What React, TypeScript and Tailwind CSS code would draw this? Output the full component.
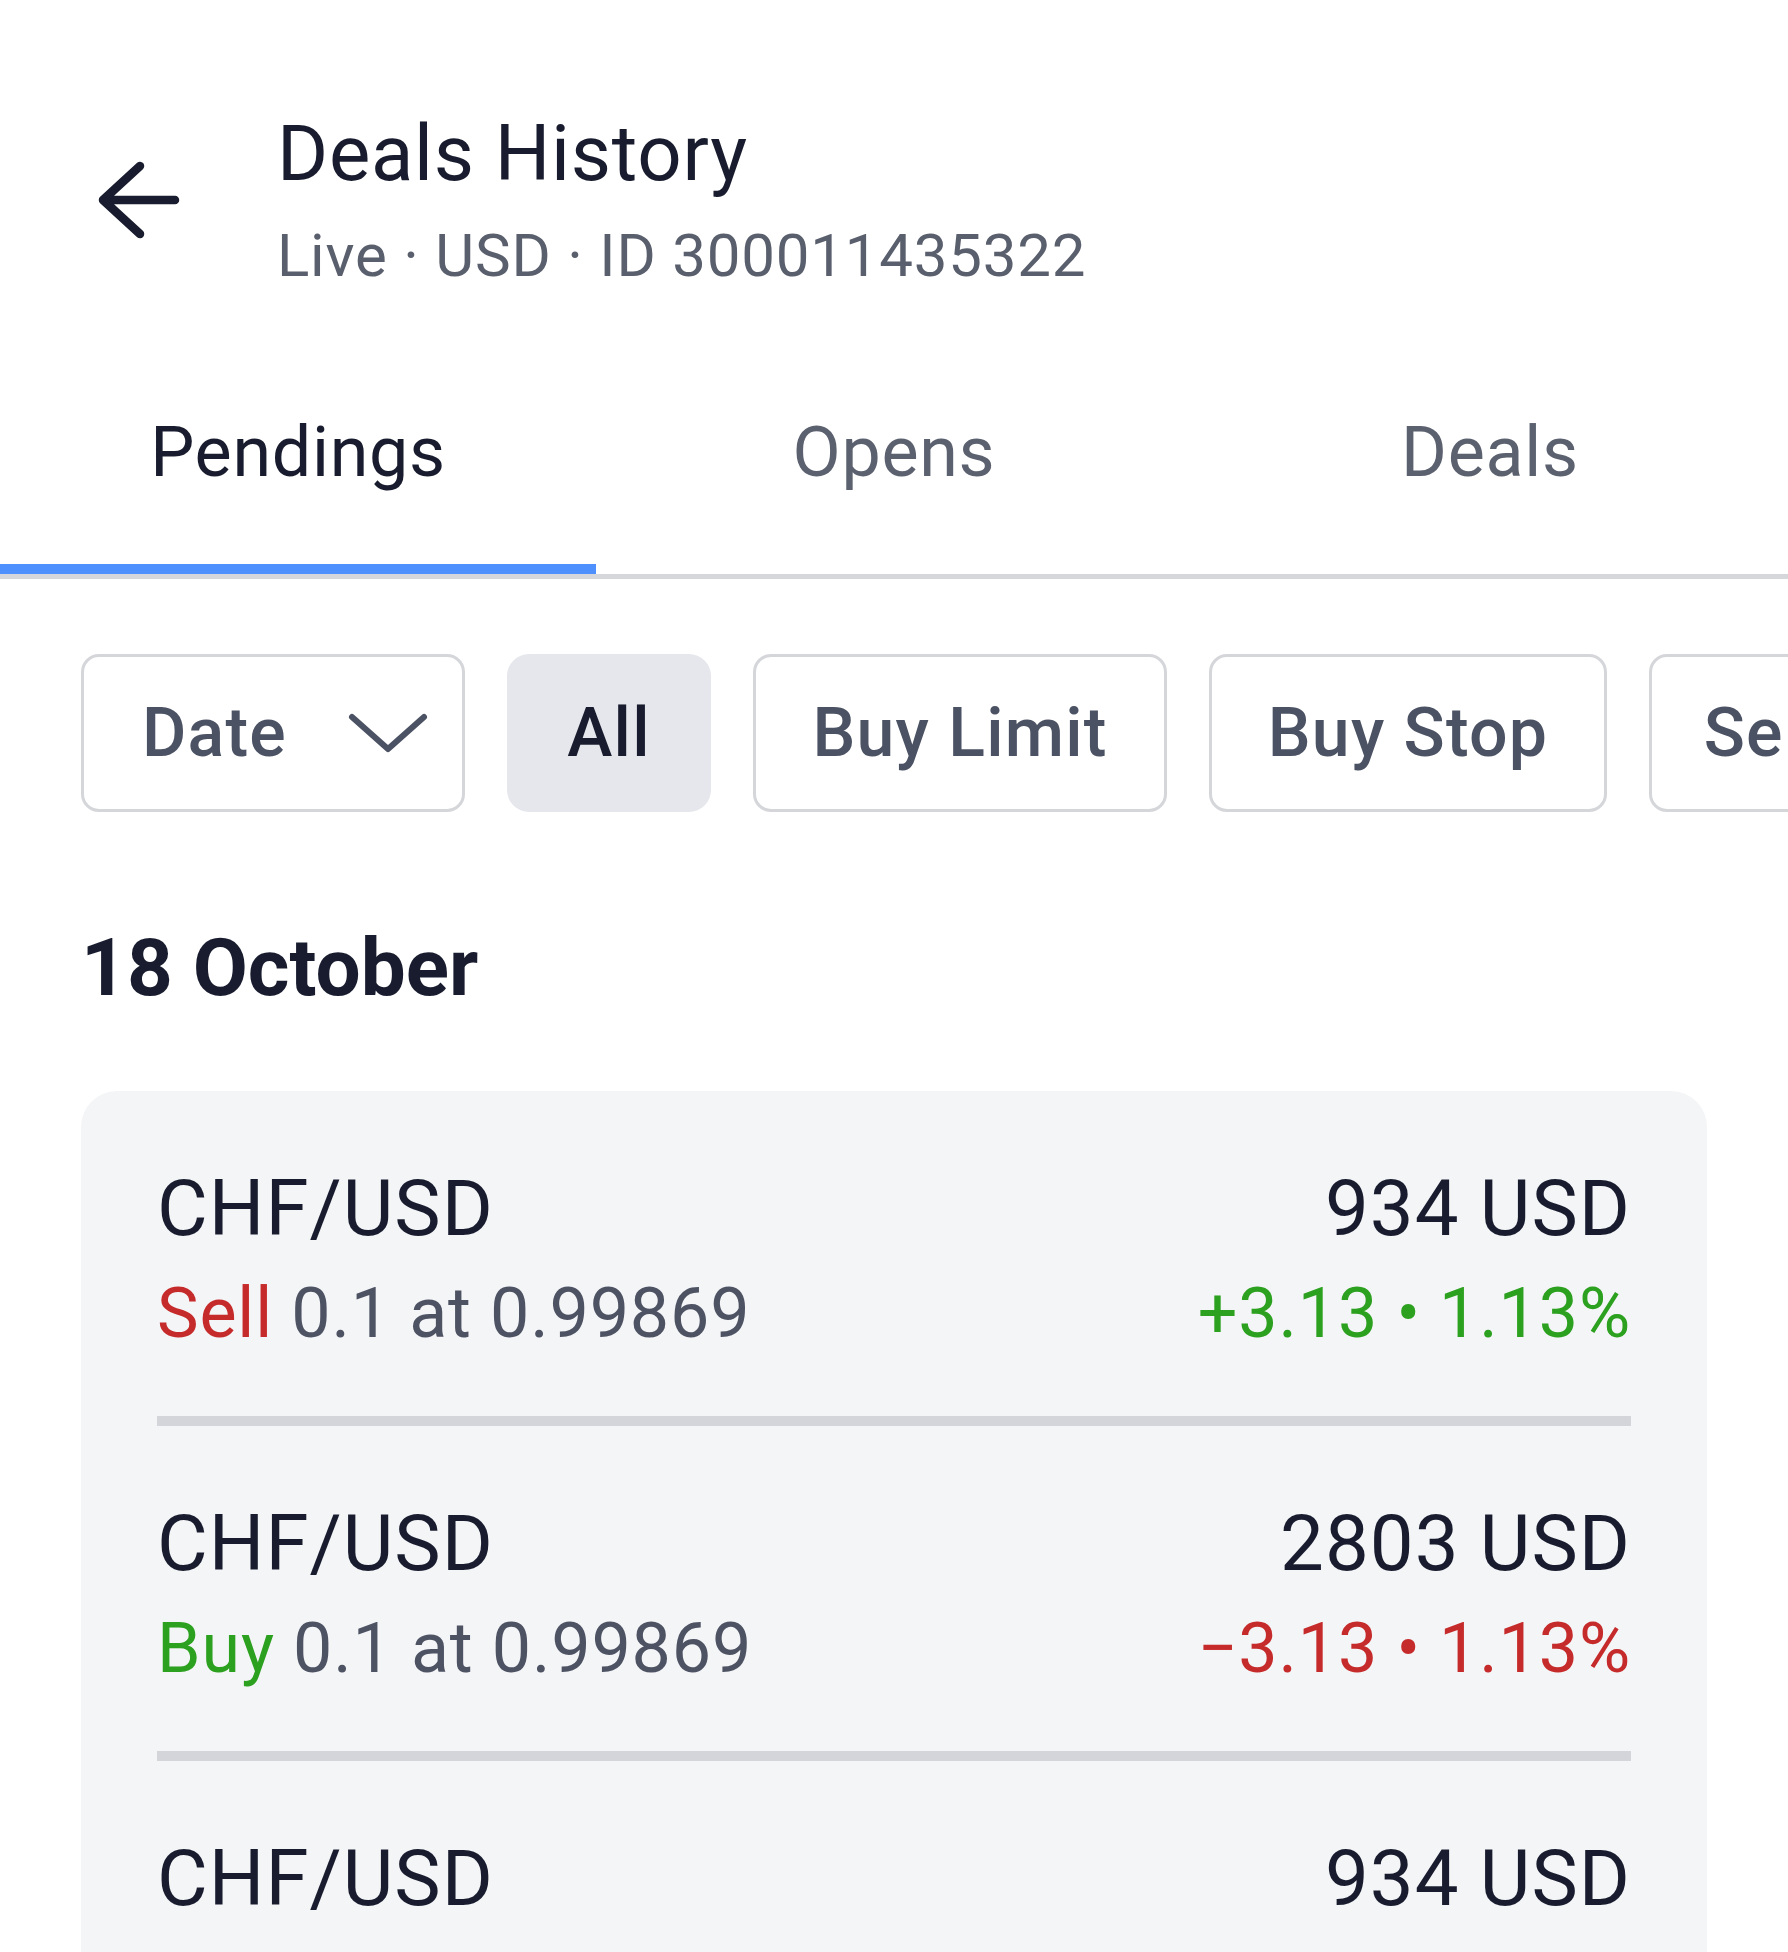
import React from "react";

const rows = [
  { pair: "CHF/USD", amount: "934 USD", side: "Sell", sideColor: "text-[#c62b2b]", pnl: "+3.13 • 1.13%", pnlColor: "text-[#2ca01f]" },
  { pair: "CHF/USD", amount: "2803 USD", side: "Buy", sideColor: "text-[#2ca01f]", pnl: "−3.13 • 1.13%", pnlColor: "text-[#c62b2b]" },
  { pair: "CHF/USD", amount: "934 USD", side: "Sell", sideColor: "text-[#c62b2b]", pnl: "+3.13 • 1.13%", pnlColor: "text-[#2ca01f]" },
];

export default function App() {
  return (
    <div
      className="w-[1788px] h-[1952px] overflow-hidden bg-white text-[#181c2e]"
      style={{ fontFamily: "Roboto, 'Noto Sans', Arial, sans-serif" }}
    >
      {/* Header */}
      <div className="flex items-center pt-[108px] pl-[99px]">
        <svg width="80" height="76" viewBox="0 0 80 76" fill="none" className="shrink-0 overflow-visible">
          <path d="M41 4 L4 38 L41 72 M4 38 H76" stroke="#181c2e" strokeWidth="8.5" strokeLinecap="round" strokeLinejoin="round" />
        </svg>
        <div className="ml-[98px] flex flex-col">
          <div className="text-[78px] leading-[92px] text-[#181c2e] tracking-[0.009em]">Deals History</div>
          <div className="mt-[21px] text-[60px] leading-[70px] text-[#5a5f6d] tracking-[0.013em]">Live · USD · ID 300011435322</div>
        </div>
      </div>

      {/* Tabs */}
      <div className="mt-[120px] flex border-b-[5px] border-[#d6d7db]">
        {["Pendings", "Opens", "Deals"].map((t, i) => (
          <div key={t} className="flex-1 flex flex-col items-center">
            <div className={`text-[70px] leading-[82px] tracking-[0.01em] ${i === 0 ? "text-[#181c2e]" : "text-[#5c6170]"}`}>{t}</div>
            <div className={`mt-[71px] h-[10px] w-full ${i === 0 ? "bg-[#4d90fe]" : "bg-transparent"}`} />
          </div>
        ))}
      </div>

      {/* Chips */}
      <div className="mt-[75px] flex gap-[42px] pl-[81px] overflow-hidden">
        <div className="shrink-0 w-[384px] h-[158px] rounded-[18px] border-[3px] border-[#d5d6da] flex items-center pl-[58px] pr-[34px] justify-between">
          <span className="text-[68px] font-medium text-[#4b5263] tracking-[0.018em]">Date</span>
          <svg width="80" height="40" viewBox="0 0 80 40" fill="none" className="overflow-visible">
            <path d="M4 4 L40 36 L76 4" stroke="#4b5263" strokeWidth="6" strokeLinecap="round" strokeLinejoin="round" />
          </svg>
        </div>
        <div className="shrink-0 w-[204px] h-[158px] rounded-[22px] bg-[#e6e7ec] flex items-center justify-center">
          <span className="text-[68px] font-medium text-[#181c2e] tracking-[0.018em]">All</span>
        </div>
        {[
          { t: "Buy Limit", w: "w-[414px]" },
          { t: "Buy Stop", w: "w-[398px]" },
          { t: "Sell Limit", w: "w-[404px]" },
          { t: "Sell Stop", w: "w-[392px]" },
        ].map((c) => (
          <div
            key={c.t}
            className={`shrink-0 ${c.w} h-[158px] rounded-[18px] border-[3px] border-[#d5d6da] flex items-center justify-center`}
          >
            <span className="text-[68px] font-medium text-[#4b5263] whitespace-nowrap tracking-[0.018em]">{c.t}</span>
          </div>
        ))}
      </div>

      {/* Date heading */}
      <div className="mt-[109px] pl-[81px] text-[80px] leading-[94px] font-bold text-[#181c2e]">18 October</div>

      {/* Card */}
      <div className="mt-[76px] mx-[81px] rounded-[36px] bg-[#f4f5f7] px-[76px]">
        {rows.map((r, i) => (
          <div key={i}>
            <div className="pt-[72px] pb-[61px]">
              <div className="flex justify-between text-[78px] leading-[92px] text-[#181c2e] tracking-[0.013em]">
                <span>{r.pair}</span>
                <span>{r.amount}</span>
              </div>
              <div className="mt-[16px] flex justify-between text-[70px] leading-[84px] tracking-[0.012em]">
                <span className="text-[#4e5364]">
                  <span className={r.sideColor}>{r.side}</span> 0.1 at 0.99869
                </span>
                <span className={r.pnlColor}>{r.pnl}</span>
              </div>
            </div>
            <div className="h-[10px] bg-[#d4d5da]" />
          </div>
        ))}
      </div>
    </div>
  );
}
